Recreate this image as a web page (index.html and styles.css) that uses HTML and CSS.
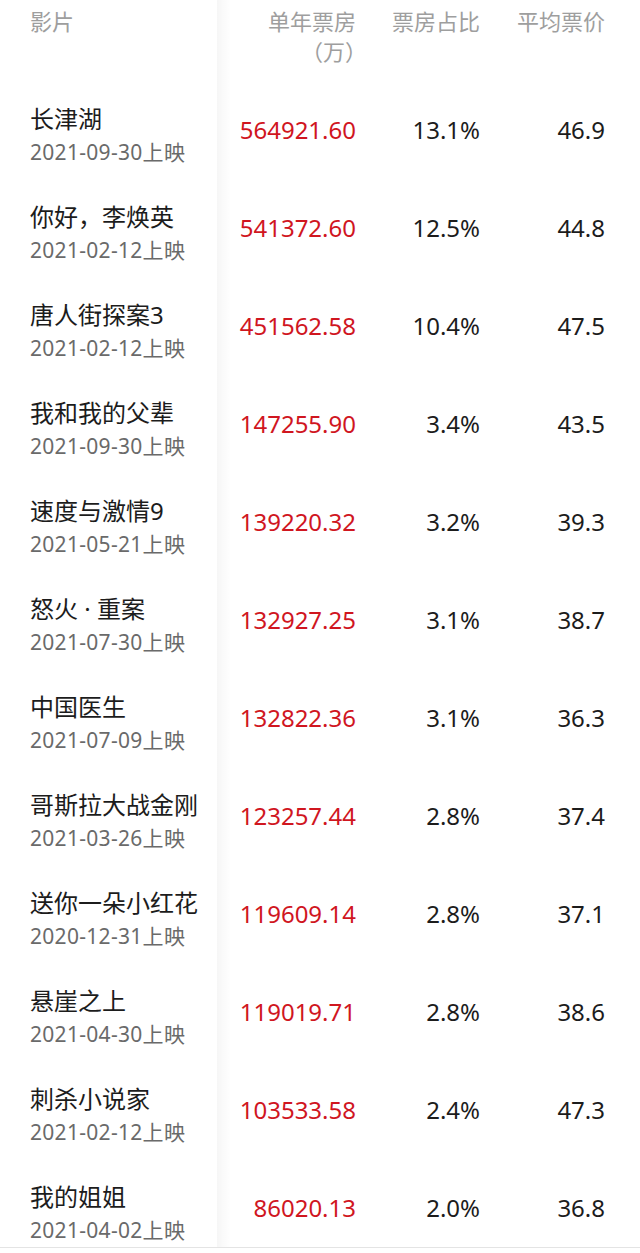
FILE: index.html
```html
<!DOCTYPE html>
<html lang="zh-CN">
<head>
<meta charset="utf-8">
<title>2021年票房</title>
<link rel="stylesheet" href="styles.css">
</head>
<body>
<div class="table">
  <div class="head">
    <div class="hname">影片</div>
    <div class="hnum">单年票房<br><span class="unit">（万）</span></div>
    <div class="hnum">票房占比</div>
    <div class="hnum">平均票价</div>
  </div>
  <div class="row">
    <div class="name"><div class="title">长津湖</div><div class="date">2021-09-30上映</div></div>
    <div class="num box">564921.60</div><div class="num">13.1%</div><div class="num">46.9</div>
  </div>
  <div class="row">
    <div class="name"><div class="title">你好，李焕英</div><div class="date">2021-02-12上映</div></div>
    <div class="num box">541372.60</div><div class="num">12.5%</div><div class="num">44.8</div>
  </div>
  <div class="row">
    <div class="name"><div class="title">唐人街探案3</div><div class="date">2021-02-12上映</div></div>
    <div class="num box">451562.58</div><div class="num">10.4%</div><div class="num">47.5</div>
  </div>
  <div class="row">
    <div class="name"><div class="title">我和我的父辈</div><div class="date">2021-09-30上映</div></div>
    <div class="num box">147255.90</div><div class="num">3.4%</div><div class="num">43.5</div>
  </div>
  <div class="row">
    <div class="name"><div class="title">速度与激情9</div><div class="date">2021-05-21上映</div></div>
    <div class="num box">139220.32</div><div class="num">3.2%</div><div class="num">39.3</div>
  </div>
  <div class="row">
    <div class="name"><div class="title">怒火 · 重案</div><div class="date">2021-07-30上映</div></div>
    <div class="num box">132927.25</div><div class="num">3.1%</div><div class="num">38.7</div>
  </div>
  <div class="row">
    <div class="name"><div class="title">中国医生</div><div class="date">2021-07-09上映</div></div>
    <div class="num box">132822.36</div><div class="num">3.1%</div><div class="num">36.3</div>
  </div>
  <div class="row">
    <div class="name"><div class="title">哥斯拉大战金刚</div><div class="date">2021-03-26上映</div></div>
    <div class="num box">123257.44</div><div class="num">2.8%</div><div class="num">37.4</div>
  </div>
  <div class="row">
    <div class="name"><div class="title">送你一朵小红花</div><div class="date">2020-12-31上映</div></div>
    <div class="num box">119609.14</div><div class="num">2.8%</div><div class="num">37.1</div>
  </div>
  <div class="row">
    <div class="name"><div class="title">悬崖之上</div><div class="date">2021-04-30上映</div></div>
    <div class="num box">119019.71</div><div class="num">2.8%</div><div class="num">38.6</div>
  </div>
  <div class="row">
    <div class="name"><div class="title">刺杀小说家</div><div class="date">2021-02-12上映</div></div>
    <div class="num box">103533.58</div><div class="num">2.4%</div><div class="num">47.3</div>
  </div>
  <div class="row">
    <div class="name"><div class="title">我的姐姐</div><div class="date">2021-04-02上映</div></div>
    <div class="num box">86020.13</div><div class="num">2.0%</div><div class="num">36.8</div>
  </div>
</div>
</body>
</html>
```

FILE: styles.css
```css
html, body {
  margin: 0;
  padding: 0;
  background: #ffffff;
}

body {
  font-family: "Noto Sans", "Noto Sans CJK SC", sans-serif;
  color: #1c1c1c;
  width: 640px;
  height: 1253px;
  overflow: hidden;
}

.table {
  border-bottom: 1px solid #e4e4e4;
  background-image: linear-gradient(to right, rgba(0, 0, 0, 0.035), rgba(0, 0, 0, 0));
  background-position: 217px 0;
  background-size: 14px 100%;
  background-repeat: no-repeat;
}

.head,
.row {
  display: grid;
  grid-template-columns: 220px 136px 124px 125px;
  padding-right: 35px;
  box-sizing: border-box;
}

/* header */
.head {
  height: 71px;
  padding-top: 6px;
  font-size: 22px;
  line-height: 30px;
  color: #9e9e9e;
}

.hname {
  padding-left: 30px;
}

.hnum {
  text-align: right;
  white-space: nowrap;
}

.unit {
  font-feature-settings: "halt";
}

/* body rows */
.row {
  height: 98px;
}

.name {
  padding-left: 30px;
  padding-top: 31px;
}

.title {
  font-size: 24px;
  line-height: 34px;
  color: #1c1c1c;
  white-space: nowrap;
}

.date {
  font-size: 21px;
  line-height: 32px;
  letter-spacing: 0.3px;
  color: #6a6a6a;
  white-space: nowrap;
}

.num {
  text-align: right;
  white-space: nowrap;
  padding-top: 42px;
  font-size: 24px;
  line-height: 34px;
  color: #1c1c1c;
}

.num.box {
  color: #d0161f;
}
```
